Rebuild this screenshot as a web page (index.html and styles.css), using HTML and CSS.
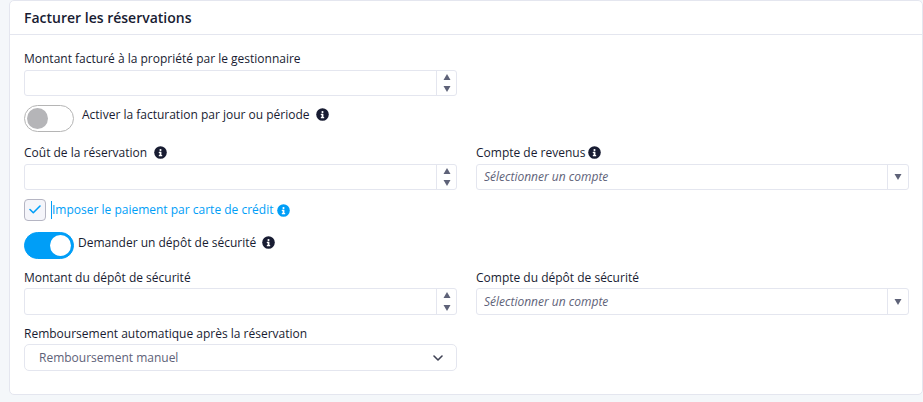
FILE: index.html
```html
<!DOCTYPE html>
<html lang="fr">
<head>
  <meta charset="UTF-8">
  <meta name="viewport" content="width=device-width, initial-scale=1.0">
  <title>Facturer les réservations</title>
  <link rel="stylesheet" href="styles.css">
</head>
<body>
  <!-- Shared icons -->
  <svg class="sprite" aria-hidden="true">
    <symbol id="icon-info" viewBox="0 0 512 512">
      <path fill="currentColor" d="M256 8a248 248 0 1 0 0 496a248 248 0 1 0 0-496z"/>
      <path fill="#fff" d="M256 118a42 42 0 1 1 0 84a42 42 0 1 1 0-84zM200 228h92v128h20q12 0 12 12v24q0 12-12 12H200q-12 0-12-12v-24q0-12 12-12h20v-80h-20q-12 0-12-12v-24q0-12 12-12z"/>
    </symbol>
    <symbol id="icon-up" viewBox="0 0 8 6">
      <path fill="currentColor" d="M4 0L7.5 6H.5z"/>
    </symbol>
    <symbol id="icon-down" viewBox="0 0 8 6">
      <path fill="currentColor" d="M.5 0h7L4 6z"/>
    </symbol>
  </svg>

  <section class="card">
    <h1 class="card-title">Facturer les réservations</h1>

    <form class="card-body">
      <div class="row">
        <div class="field">
          <div class="field-label"><label for="amount">Montant facturé à la propriété par le gestionnaire</label></div>
          <div class="control">
            <input type="number" id="amount">
            <div class="spinner">
              <button type="button" aria-label="Augmenter"><svg class="arrow"><use href="#icon-up"/></svg></button>
              <button type="button" aria-label="Diminuer"><svg class="arrow"><use href="#icon-down"/></svg></button>
            </div>
          </div>
        </div>
      </div>

      <div class="switch-row spaced">
        <input type="checkbox" class="switch" id="per-day">
        <label for="per-day">Activer la facturation par jour ou période</label>
        <svg class="info"><use href="#icon-info"/></svg>
      </div>

      <div class="row">
        <div class="field">
          <div class="field-label">
            <label for="cost">Coût de la réservation</label>
            <svg class="info"><use href="#icon-info"/></svg>
          </div>
          <div class="control">
            <input type="number" id="cost">
            <div class="spinner">
              <button type="button" aria-label="Augmenter"><svg class="arrow"><use href="#icon-up"/></svg></button>
              <button type="button" aria-label="Diminuer"><svg class="arrow"><use href="#icon-down"/></svg></button>
            </div>
          </div>
        </div>
        <div class="field">
          <div class="field-label tight">
            <label for="income-account">Compte de revenus</label>
            <svg class="info"><use href="#icon-info"/></svg>
          </div>
          <div class="control">
            <select id="income-account" class="placeholder">
              <option>Sélectionner un compte</option>
            </select>
            <span class="drop"><svg class="arrow"><use href="#icon-down"/></svg></span>
          </div>
        </div>
      </div>

      <div class="check-row">
        <input type="checkbox" class="check" id="card-payment" checked>
        <label for="card-payment">Imposer le paiement par carte de crédit</label>
        <svg class="info"><use href="#icon-info"/></svg>
        <svg class="tick" viewBox="0 0 12 9"><path d="M1 4.5L4.3 7.7L11 1" fill="none" stroke="currentColor" stroke-width="1.6" stroke-linecap="round" stroke-linejoin="round"/></svg>
      </div>

      <div class="switch-row tight">
        <input type="checkbox" class="switch" id="deposit" checked>
        <label for="deposit">Demander un dépôt de sécurité</label>
        <svg class="info"><use href="#icon-info"/></svg>
      </div>

      <div class="row tall">
        <div class="field">
          <div class="field-label"><label for="deposit-amount">Montant du dépôt de sécurité</label></div>
          <div class="control">
            <input type="number" id="deposit-amount">
            <div class="spinner">
              <button type="button" aria-label="Augmenter"><svg class="arrow"><use href="#icon-up"/></svg></button>
              <button type="button" aria-label="Diminuer"><svg class="arrow"><use href="#icon-down"/></svg></button>
            </div>
          </div>
        </div>
        <div class="field">
          <div class="field-label"><label for="deposit-account">Compte du dépôt de sécurité</label></div>
          <div class="control">
            <select id="deposit-account" class="placeholder">
              <option>Sélectionner un compte</option>
            </select>
            <span class="drop"><svg class="arrow"><use href="#icon-down"/></svg></span>
          </div>
        </div>
      </div>

      <div class="row tall">
        <div class="field">
          <div class="field-label"><label for="refund">Remboursement automatique après la réservation</label></div>
          <div class="control rounded">
            <select id="refund" class="refund">
              <option>Remboursement manuel</option>
            </select>
            <span class="chevron"><svg viewBox="0 0 10 6"><path d="M1 1l4 4l4-4" fill="none" stroke="currentColor" stroke-width="1.6" stroke-linecap="round" stroke-linejoin="round"/></svg></span>
          </div>
        </div>
      </div>
    </form>
  </section>
</body>
</html>
```

FILE: styles.css
```css
* {
  box-sizing: border-box;
}
body {
  margin: 0;
  padding: 0 0 7px 9px;
  background: #f4f7fa;
  color: #181c32;
  font-family: "Open Sans", "Noto Sans", sans-serif;
  font-size: 12px;
  line-height: 18px;
}
input, select, button {
  margin: 0;
  font: inherit;
  color: inherit;
}
.sprite {
  display: none;
}
.card {
  background: #fff;
  border: 1px solid #e4e6ef;
  border-radius: 5px;
}
.card-title {
  margin: 0;
  padding: 8px 14px 7px;
  border-bottom: 1px solid #e4e6ef;
  font-size: 14px;
  font-weight: 600;
  line-height: 18px;
}
.card-body {
  display: flex;
  flex-direction: column;
  gap: 9px;
  padding: 15px 13px 23px 14px;
}
.row {
  display: grid;
  grid-template-columns: 1fr 1fr;
  gap: 19px;
}
.field-label {
  display: flex;
  align-items: flex-start;
  gap: 7px;
  margin-bottom: 2px;
}
.field-label.tight {
  gap: 3px;
}
.row.tall .field-label {
  padding-top: 1px;
  margin-bottom: 1px;
}
.info {
  width: 13px;
  height: 13px;
  flex: none;
}
.field-label .info {
  margin-top: 2px;
}

/* Text boxes and drop-downs */
.control {
  display: flex;
  height: 26px;
  border: 1px solid #e4e6ef;
  border-radius: 3px;
}
.row.tall .control {
  height: 27px;
}
.control.rounded {
  border-radius: 5px;
}
.control input,
.control select {
  flex: 1;
  min-width: 0;
  padding: 0 7px;
  border: none;
  outline: none;
  background: transparent;
  appearance: none;
}
.control input {
  appearance: textfield;
}
.control select.placeholder {
  color: #5e6278;
  font-style: italic;
}
.control select.refund {
  padding: 0 14px;
  color: #5e6278;
}
.spinner {
  display: flex;
  flex-direction: column;
  width: 20px;
  border-left: 1px solid #e4e6ef;
}
.spinner button {
  flex: 1;
  display: flex;
  align-items: center;
  justify-content: center;
  padding: 0;
  border: none;
  background: none;
}
.arrow {
  width: 8px;
  height: 6px;
  color: #5e6278;
}
.drop {
  display: flex;
  align-items: center;
  justify-content: center;
  width: 21px;
  border-left: 1px solid #e4e6ef;
}
.chevron {
  display: flex;
  align-items: center;
  padding-right: 13px;
  color: #3f4254;
}
.chevron svg {
  width: 10px;
  height: 6px;
}

/* Switches */
.switch-row {
  display: flex;
  align-items: flex-start;
  gap: 8px;
}
.switch-row.spaced {
  margin-bottom: 3px;
}
.switch-row label {
  margin-right: -2px;
  padding-top: 1px;
}
.switch-row .info {
  margin-top: 3px;
}
.switch-row.tight label {
  margin-left: -4px;
  padding-top: 2px;
}
.switch-row.tight .info {
  margin-top: 4px;
}
.switch {
  width: 50px;
  height: 27px;
  padding: 2px;
  border: 1px solid #b5b5b5;
  border-radius: 14px;
  background: #fff;
  appearance: none;
}
.switch::before {
  content: "";
  display: block;
  width: 21px;
  height: 21px;
  border-radius: 50%;
  background: #b5b5b8;
}
.switch:checked {
  border-color: #009ef7;
  background: #009ef7;
}
.switch:checked::before {
  margin-left: auto;
  background: #fff;
}

/* Tick box */
.check-row {
  position: relative;
  display: flex;
  align-items: center;
  gap: 4px;
  margin-bottom: 2px;
  color: #009ef7;
}
.check {
  width: 22px;
  height: 22px;
  border: 1px solid #b5b5c3;
  border-radius: 4px;
  background: #f5f5fa;
  appearance: none;
}
.check-row label {
  margin-left: 1px;
  border-left: 1px solid #009ef7;
}
.tick {
  position: absolute;
  left: 5px;
  top: 6px;
  width: 12px;
  height: 9px;
  pointer-events: none;
}
.check:not(:checked) ~ .tick {
  display: none;
}
```
